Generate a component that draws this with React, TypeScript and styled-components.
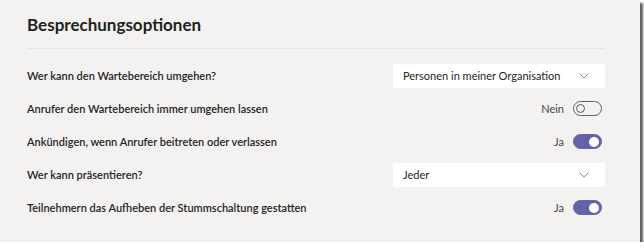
import styled, { createGlobalStyle } from "styled-components";

const GlobalStyle = createGlobalStyle`
  html, body {
    margin: 0;
    padding: 0;
    background: #ffffff;
  }
  body {
    font-family: "Lato", "Open Sans", sans-serif;
    color: #252423;
  }
`;

const Panel = styled.section`
  width: 640px;
  height: 242px;
  box-sizing: border-box;
  background: #f3f2f1;
  padding: 0 35px 0 27px;
  box-shadow: 3px 3px 2px rgba(40, 40, 40, 0.75);
`;

const Header = styled.header`
  height: 48px;
  border-bottom: 1px solid #e6e4e2;
  display: flex;
  align-items: flex-start;
`;

const Title = styled.h1`
  margin: 14px 0 0;
  font-size: 17px;
  font-weight: 700;
  color: #201f1e;
`;

const Rows = styled.div`
  padding-top: 10px;
  display: flex;
  flex-direction: column;
`;

const Row = styled.div`
  height: 33px;
  display: flex;
  align-items: center;
  justify-content: space-between;
`;

const Label = styled.span`
  font-size: 11px;
  font-weight: 600;
  color: #252423;
`;

const Select = styled.div`
  width: 212px;
  height: 24px;
  box-sizing: border-box;
  background: #ffffff;
  border-radius: 2px;
  padding: 0 16px 0 10px;
  display: flex;
  align-items: center;
  justify-content: space-between;
  font-size: 11px;
  color: #252423;
`;

const Chevron = () => (
  <svg width="10" height="6" viewBox="0 0 10 6">
    <path d="M0.5 0.5 L5 5 L9.5 0.5" fill="none" stroke="#8a8886" strokeWidth="1" />
  </svg>
);

const SwitchGroup = styled.div`
  display: flex;
  align-items: center;
  gap: 9px;
  margin-right: 3px;
  font-size: 11px;
  color: #484644;
`;

const Track = styled.span<{ $on: boolean }>`
  width: 29px;
  height: 15px;
  box-sizing: border-box;
  border-radius: 8px;
  border: 1px solid ${(p) => (p.$on ? "#6264a7" : "#605e5c")};
  background: ${(p) => (p.$on ? "#6264a7" : "transparent")};
  display: flex;
  align-items: center;
  justify-content: ${(p) => (p.$on ? "flex-end" : "flex-start")};
  padding: 0 2px;
`;

const Knob = styled.span<{ $on: boolean }>`
  width: ${(p) => (p.$on ? "10px" : "9px")};
  height: ${(p) => (p.$on ? "10px" : "9px")};
  border-radius: 50%;
  box-sizing: border-box;
  background: ${(p) => (p.$on ? "#ffffff" : "transparent")};
  border: ${(p) => (p.$on ? "none" : "1px solid #605e5c")};
`;

type Option =
  | { label: string; kind: "select"; value: string }
  | { label: string; kind: "switch"; on: boolean };

const options: Option[] = [
  { label: "Wer kann den Wartebereich umgehen?", kind: "select", value: "Personen in meiner Organisation" },
  { label: "Anrufer den Wartebereich immer umgehen lassen", kind: "switch", on: false },
  { label: "Ankündigen, wenn Anrufer beitreten oder verlassen", kind: "switch", on: true },
  { label: "Wer kann präsentieren?", kind: "select", value: "Jeder" },
  { label: "Teilnehmern das Aufheben der Stummschaltung gestatten", kind: "switch", on: true },
];

function App() {
  return (
    <>
      <GlobalStyle />
      <Panel>
        <Header>
          <Title>Besprechungsoptionen</Title>
        </Header>
        <Rows>
          {options.map((o) => (
            <Row key={o.label}>
              <Label>{o.label}</Label>
              {o.kind === "select" ? (
                <Select>
                  <span>{o.value}</span>
                  <Chevron />
                </Select>
              ) : (
                <SwitchGroup>
                  <span>{o.on ? "Ja" : "Nein"}</span>
                  <Track $on={o.on}>
                    <Knob $on={o.on} />
                  </Track>
                </SwitchGroup>
              )}
            </Row>
          ))}
        </Rows>
      </Panel>
    </>
  );
}

export default App;
